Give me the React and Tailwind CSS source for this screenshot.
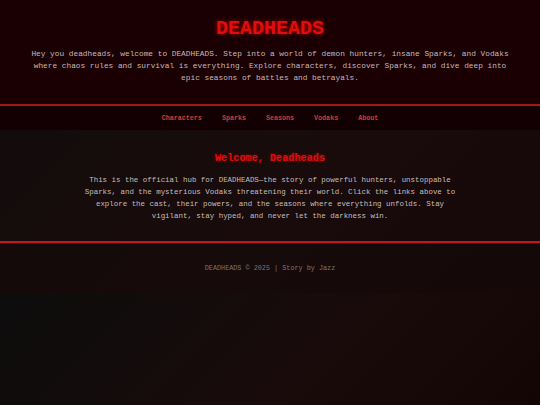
import React from 'react';

const links = ['Characters', 'Sparks', 'Seasons', 'Vodaks', 'About'];

const bg = 'bg-[linear-gradient(135deg,#0d0d0d_0%,#1a0b0b_60%,#140505_100%)]';

export default function App() {
  return (
    <div className="h-[405px] flex flex-col font-['Liberation_Mono','Courier_New',monospace]">
      <div className={`${bg}`}>
        <header className="bg-[#1a0003] pt-[17px] pb-[20px] px-[20px] text-center border-b-2 border-[#a3161a]">
          <h1 className="text-[20px] leading-[24px] font-bold text-[#e00d0d] [text-shadow:0_0_4px_#ff0000aa]">DEADHEADS</h1>
          <p className="mt-[7px] text-[7.8px] leading-[12px] text-[#c4b8b8] max-w-[490px] mx-auto">
            Hey you deadheads, welcome to DEADHEADS. Step into a world of demon hunters, insane Sparks, and Vodaks where chaos rules and survival is everything. Explore characters, discover Sparks, and dive deep into epic seasons of battles and betrayals.
          </p>
        </header>
        <nav className="bg-[#120002] h-[24px] flex items-center justify-center gap-[20px]">
          {links.map((l) => (
            <a key={l} href="#" className="text-[6.7px] font-bold text-[#d63b35]">{l}</a>
          ))}
        </nav>
        <main className="bg-[#1a0d0d]/40 pt-[22px] pb-[19px] px-[20px] text-center">
          <h2 className="text-[10.2px] leading-[14px] font-bold text-[#e00d0d] [text-shadow:0_0_3px_#ff000088]">Welcome, Deadheads</h2>
          <p className="mt-[8px] text-[7.45px] leading-[12px] text-[#c4bdbd] max-w-[380px] mx-auto">
            This is the official hub for DEADHEADS—the story of powerful hunters, unstoppable Sparks, and the mysterious Vodaks threatening their world. Click the links above to explore the cast, their powers, and the seasons where everything unfolds. Stay vigilant, stay hyped, and never let the darkness win.
          </p>
        </main>
        <footer className="bg-[#160a0a]/60 border-t-2 border-[#c8141a] h-[52px] flex items-center justify-center">
          <p className="text-[6.8px] text-[#7d7373]">DEADHEADS © 2025 | Story by Jazz</p>
        </footer>
      </div>
      <div className={`flex-1 ${bg}`}></div>
    </div>
  );
}
